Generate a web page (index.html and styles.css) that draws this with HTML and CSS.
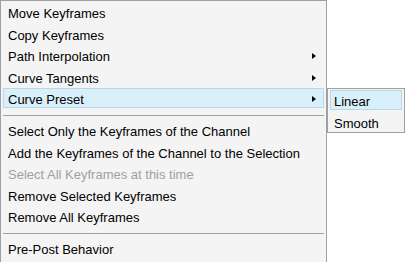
FILE: index.html
```html
<!DOCTYPE html>
<html lang="en">
<head>
    <meta charset="UTF-8">
    <title>Keyframe Context Menu</title>
    <link rel="stylesheet" href="styles.css">
</head>
<body>
    <div class="menus">
        <ul class="menu">
            <li class="item">Move Keyframes</li>
            <li class="item">Copy Keyframes</li>
            <li class="item has-sub">Path Interpolation</li>
            <li class="item has-sub">Curve Tangents</li>
            <li class="item has-sub active">Curve Preset</li>
            <li class="separator"></li>
            <li class="item">Select Only the Keyframes of the Channel</li>
            <li class="item">Add the Keyframes of the Channel to the Selection</li>
            <li class="item disabled">Select All Keyframes at this time</li>
            <li class="item">Remove Selected Keyframes</li>
            <li class="item">Remove All Keyframes</li>
            <li class="separator"></li>
            <li class="item">Pre-Post Behavior</li>
        </ul>
        <ul class="menu submenu">
            <li class="item active">Linear</li>
            <li class="item">Smooth</li>
        </ul>
    </div>
</body>
</html>
```

FILE: styles.css
```css
* {
    box-sizing: border-box;
}

body {
    margin: 0;
    background: #ffffff;
    font-family: "Liberation Sans", Arial, sans-serif;
    font-size: 13px;
    color: #000000;
}

.menus {
    display: flex;
    align-items: flex-start;
}

.menu {
    list-style: none;
    margin: 0;
    padding: 1px 2px 0 2px;
    width: 327px;
    height: 270px;
    background: #f4f4f4;
    border: 1px solid #a0a0a0;
    border-bottom: none;
}

.submenu {
    width: 78px;
    height: 45px;
    margin-top: 88px;
    padding: 1px 2px;
    border-bottom: 1px solid #a0a0a0;
}

.item {
    position: relative;
    height: 20px;
    line-height: 17px;
    padding-top: 2px;
    margin-bottom: 1.5px;
    padding-left: 4px;
    border: 1px solid transparent;
    white-space: nowrap;
}

.submenu .item {
    padding-left: 3px;
}

.item.active {
    background: #d9f0fb;
    border-color: #b5d8ea;
}

.item.disabled {
    color: #a0a0a0;
}

.has-sub::after {
    content: "";
    position: absolute;
    right: 7px;
    top: 7px;
    border-left: 4px solid #000000;
    border-top: 3px solid transparent;
    border-bottom: 3px solid transparent;
}

.separator {
    height: 10.5px;
    position: relative;
}

.separator::before {
    content: "";
    position: absolute;
    left: 0;
    right: 0;
    top: 5px;
    border-top: 1px solid #a0a0a0;
}
```
